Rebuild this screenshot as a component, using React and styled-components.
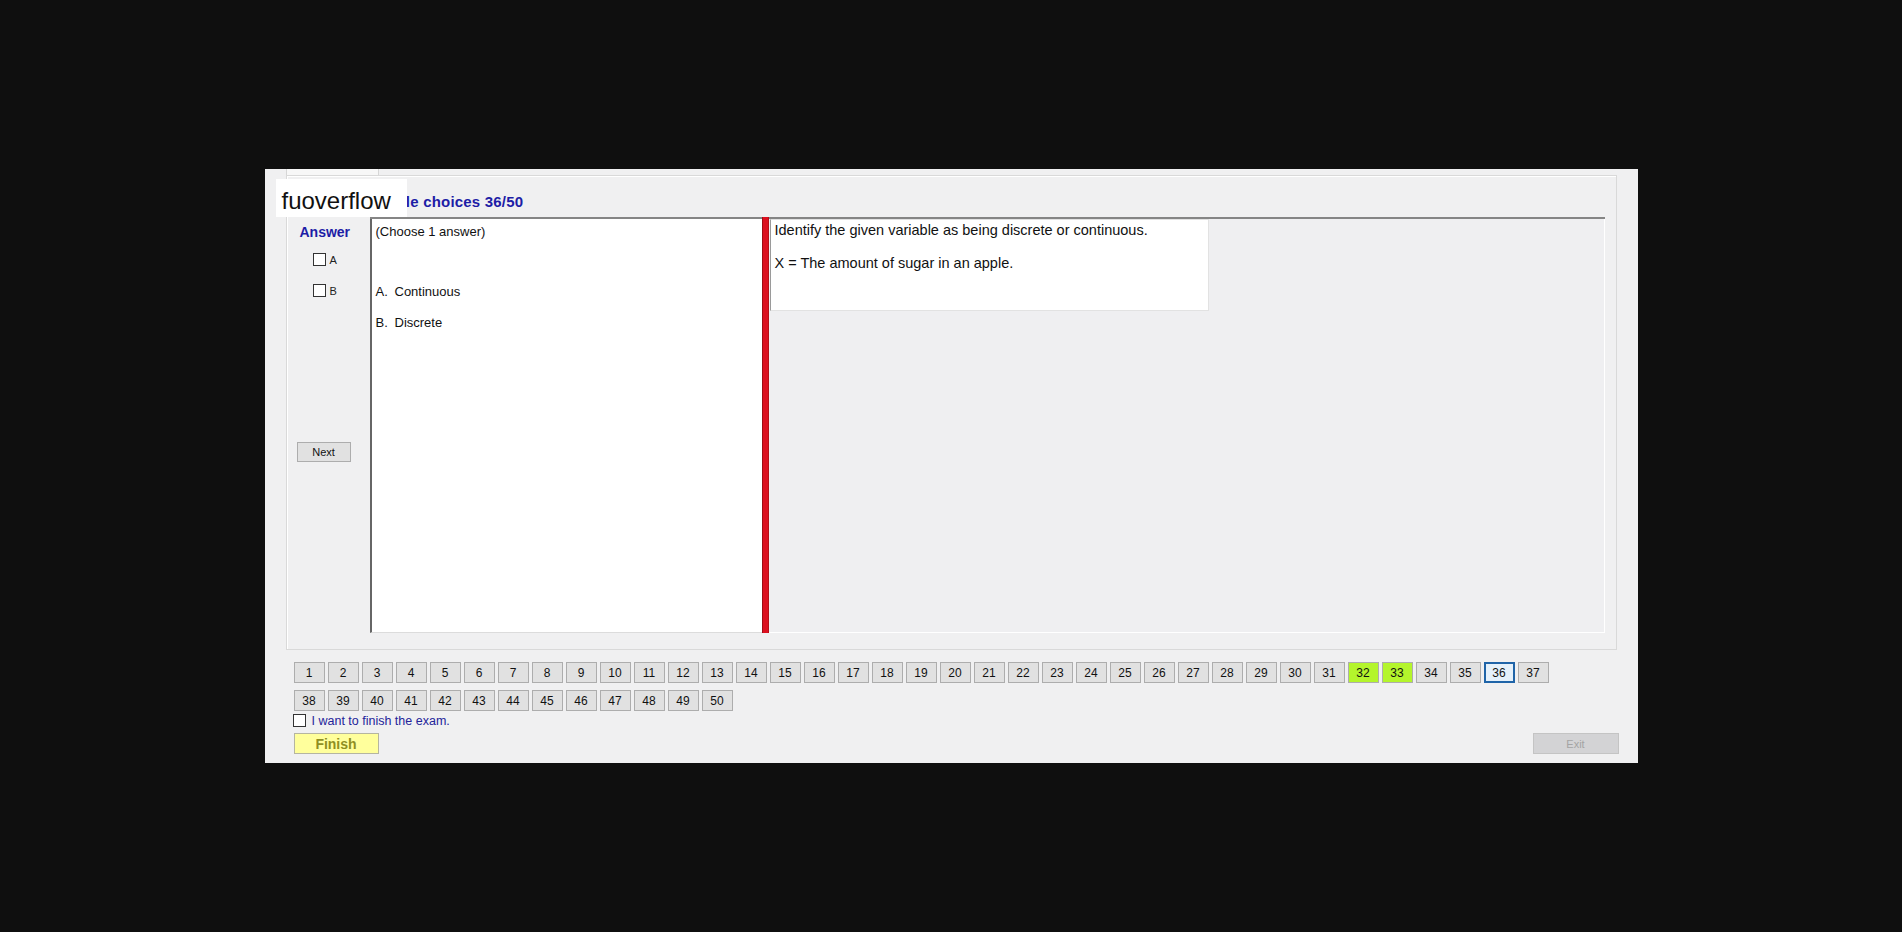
import React from 'react';
import styled, { createGlobalStyle } from 'styled-components';

const GlobalStyle = createGlobalStyle`
    html, body {
        margin: 0;
        padding: 0;
        background: #0f0f0f;
        font-family: "Liberation Sans", Arial, sans-serif;
    }
`;

const TOTAL = 50;
const PER_ROW = 37;
const answered = [32, 33];
const current = 36;

function App() {
    const rows = [];
    for (let i = 0; i < TOTAL; i += PER_ROW) {
        const row = [];
        for (let n = i + 1; n <= Math.min(i + PER_ROW, TOTAL); n++) row.push(n);
        rows.push(row);
    }

    return (
        <Page>
            <GlobalStyle />
            <Window>
                <Watermark>fuoverflow</Watermark>
                <TabStrip>
                    <Tab />
                </TabStrip>
                <GroupBox>
                    <TitleRow>Multiple choices 36/50</TitleRow>
                    <Body>
                        <AnswerColumn>
                            <AnswerHeading>Answer</AnswerHeading>
                            <OptionRow $gap={13}>
                                <CheckBox />
                                <OptionLabel>A</OptionLabel>
                            </OptionRow>
                            <OptionRow $gap={18}>
                                <CheckBox />
                                <OptionLabel>B</OptionLabel>
                            </OptionRow>
                            <NextButton>Next</NextButton>
                        </AnswerColumn>
                        <ContentPanel>
                            <ChoicesPane>
                                <ChoiceLine $gap={5}>(Choose 1 answer)</ChoiceLine>
                                <ChoiceLine $gap={45}>
                                    <Letter>A.</Letter>Continuous
                                </ChoiceLine>
                                <ChoiceLine $gap={16}>
                                    <Letter>B.</Letter>Discrete
                                </ChoiceLine>
                            </ChoicesPane>
                            <Splitter />
                            <QuestionPane>
                                <QuestionBox>
                                    <QuestionLine $gap={2}>
                                        Identify the given variable as being discrete or continuous.
                                    </QuestionLine>
                                    <QuestionLine $gap={16}>
                                        X = The amount of sugar in an apple.
                                    </QuestionLine>
                                </QuestionBox>
                            </QuestionPane>
                        </ContentPanel>
                    </Body>
                </GroupBox>

                <NavGrid>
                    {rows.map((row, r) => (
                        <NavRow key={r}>
                            {row.map((n) => (
                                <NavButton
                                    key={n}
                                    $done={answered.includes(n)}
                                    $current={n === current}
                                >
                                    {n}
                                </NavButton>
                            ))}
                        </NavRow>
                    ))}
                </NavGrid>

                <FinishCheck>
                    <CheckBox />
                    <FinishLabel>I want to finish the exam.</FinishLabel>
                </FinishCheck>

                <BottomBar>
                    <FinishButton>Finish</FinishButton>
                    <ExitButton>Exit</ExitButton>
                </BottomBar>
            </Window>
        </Page>
    );
}

const Page = styled.div`
    width: 100vw;
    height: 100vh;
    display: flex;
    align-items: center;
    justify-content: center;
`;

const Window = styled.div`
    position: relative;
    width: 1373px;
    height: 594px;
    box-sizing: border-box;
    padding: 0 21px;
    background: #f0f0f1;
    display: flex;
    flex-direction: column;
`;

// site watermark laid over the window's top-left corner
const Watermark = styled.div`
    position: absolute;
    left: 11px;
    top: 10px;
    width: 131px;
    height: 38px;
    box-sizing: border-box;
    padding: 5px 0 0 6px;
    background: #fff;
    color: #111;
    font-size: 24px;
    display: flex;
    align-items: center;
    z-index: 2;
`;

const TabStrip = styled.div`
    height: 6px;
    display: flex;
`;

const Tab = styled.div`
    width: 91px;
    background: #f7f7f7;
    border-left: 1px solid #d6d6d6;
    border-right: 1px solid #d6d6d6;
`;

const GroupBox = styled.div`
    height: 475px;
    box-sizing: border-box;
    border: 1px solid #d9d9d9;
    box-shadow: inset 1px 1px 0 #fff;
    padding: 0 11px 16px 0;
    display: flex;
    flex-direction: column;
`;

const TitleRow = styled.div`
    height: 41px;
    box-sizing: border-box;
    padding: 0 0 7px 74px;
    display: flex;
    align-items: flex-end;
    color: #1d1da6;
    font-size: 15px;
    letter-spacing: 0.2px;
    font-weight: bold;
    line-height: 17px;
`;

const Body = styled.div`
    flex: 1;
    display: flex;
`;

const AnswerColumn = styled.div`
    width: 83px;
    display: flex;
    flex-direction: column;
`;

const AnswerHeading = styled.div`
    margin: 7px 0 0 13px;
    color: #1d1da6;
    font-size: 14px;
    font-weight: bold;
    line-height: 16px;
`;

const OptionRow = styled.div`
    margin: ${(p) => p.$gap}px 0 0 26px;
    display: flex;
    align-items: center;
    gap: 4px;
    height: 13px;
`;

const CheckBox = styled.span`
    display: inline-block;
    width: 11px;
    height: 11px;
    border: 1px solid #333;
    background: #fff;
    flex-shrink: 0;
`;

const OptionLabel = styled.span`
    font-size: 11px;
    color: #222;
`;

const NextButton = styled.button`
    margin: 145px 0 0 10px;
    width: 54px;
    height: 20px;
    padding: 0;
    border: 1px solid #adadad;
    background: #e1e1e1;
    font-family: inherit;
    font-size: 11px;
    color: #111;
`;

const ContentPanel = styled.div`
    flex: 1;
    display: flex;
    border-top: 2px solid #858585;
`;

const ChoicesPane = styled.div`
    width: 392px;
    border-left: 2px solid #666;
    border-bottom: 1px solid #dcdcdc;
    background: #fff;
    display: flex;
    flex-direction: column;
    padding-left: 4px;
    box-sizing: border-box;
`;

const ChoiceLine = styled.div`
    margin-top: ${(p) => p.$gap}px;
    font-size: 13px;
    line-height: 15px;
    color: #111;
    display: flex;
`;

const Letter = styled.span`
    width: 19px;
`;

const Splitter = styled.div`
    width: 5px;
    margin-top: -2px;
    background: #dc1020;
    border-left: 1px solid #9e0c16;
    border-right: 1px solid #b80d19;
`;

const QuestionPane = styled.div`
    flex: 1;
    background: #efeff1;
    border-right: 1px solid #fff;
    border-bottom: 1px solid #fff;
    padding-left: 1px;
`;

const QuestionBox = styled.div`
    width: 439px;
    height: 92px;
    box-sizing: border-box;
    background: #fff;
    border: 1px solid #e2e2e2;
    border-left-color: #9a9a9a;
    padding-left: 4px;
    display: flex;
    flex-direction: column;
`;

const QuestionLine = styled.div`
    margin-top: ${(p) => p.$gap}px;
    font-size: 14.5px;
    line-height: 17px;
    color: #111;
`;

const NavGrid = styled.div`
    margin: 12px 0 0 8px;
    display: flex;
    flex-direction: column;
    gap: 7px;
`;

const NavRow = styled.div`
    display: flex;
    gap: 3px;
`;

const NavButton = styled.button`
    width: 31px;
    height: 21px;
    padding: 0;
    box-sizing: border-box;
    font-family: inherit;
    font-size: 12px;
    color: #111;
    background: ${(p) => (p.$done ? '#b4f52c' : p.$current ? '#e5f1fb' : '#e1e1e1')};
    border: ${(p) => (p.$current ? '2px solid #1f64a8' : '1px solid #adadad')};
`;

const FinishCheck = styled.div`
    margin: 3px 0 0 7px;
    height: 13px;
    display: flex;
    align-items: center;
    gap: 6px;
`;

const FinishLabel = styled.span`
    font-size: 12.5px;
    color: #24249a;
`;

const BottomBar = styled.div`
    margin: 6px -2px 0 8px;
    display: flex;
    justify-content: space-between;
`;

const FinishButton = styled.button`
    width: 85px;
    height: 21px;
    padding: 0;
    border: 1px solid #b5b5a0;
    background: #ffff9c;
    font-family: inherit;
    font-size: 14px;
    font-weight: bold;
    color: #8f8f22;
`;

const ExitButton = styled.button`
    width: 86px;
    height: 21px;
    padding: 0;
    border: 1px solid #c4c4c4;
    background: #d3d3d5;
    font-family: inherit;
    font-size: 11px;
    color: #a4a4a4;
`;

export default App;
